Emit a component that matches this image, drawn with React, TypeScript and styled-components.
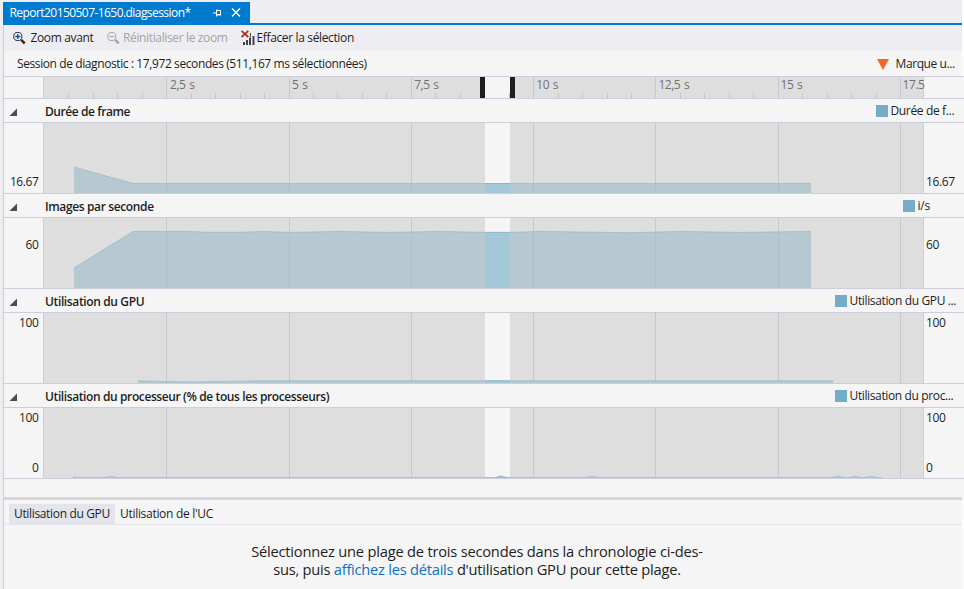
import React from "react";
import styled, { createGlobalStyle } from "styled-components";

const GlobalStyle = createGlobalStyle`
  * { box-sizing: border-box; }
  body {
    margin: 0;
    background: #eeeef2;
    color: #1e1e1e;
    font-family: "Open Sans", "Noto Sans", sans-serif;
    font-size: 12px;
    line-height: 16px;
    overflow: hidden;
  }
`;

const Window = styled.div`
  width: 964px;
  height: 589px;
  display: flex;
  flex-direction: column;
  background: #eeeef2;
`;

const Text = styled.span<{ $track?: number; $size?: number }>`
  white-space: pre;
  font-size: ${(p) => p.$size ?? 12}px;
  letter-spacing: ${(p) => p.$track ?? -0.3}px;
`;

const TopEdge = styled.div`
  height: 25px;
  border-right: 2px solid #fcfcfd;
  flex: none;
`;

const TabStrip = styled.div`
  height: 25px;
  margin-left: 3px;
  padding-top: 2px;
  border-bottom: 2px solid #007acc;
  display: flex;
`;

const DocumentTab = styled.div`
  width: 247px;
  height: 21px;
  padding: 1px 0 0 6.500px;
  background: #007acc;
  color: #fff;
  display: flex;
  align-items: center;
`;

const TabTitle = styled.div`
  width: 203.5px;
  display: flex;
`;

const TabIcons = styled.div`
  display: flex;
  align-items: center;
  gap: 9px;
  padding-bottom: 1px;
`;

const Body = styled.div`
  flex: 1;
  margin-left: 3px;
  border-left: 1px solid #cccedb;
  background: #f5f5f5;
  display: flex;
  flex-direction: column;
  min-height: 0;
`;

const Toolbar = styled.div`
  height: 26px;
  padding: 0 0 1px 9px;
  border-right: 2px solid #fcfcfd;
  background: #eeeef2;
  display: flex;
  align-items: center;
`;

const ToolButton = styled.div<{ $width: number; $gap: number; $disabled?: boolean }>`
  width: ${(p) => p.$width}px;
  display: flex;
  align-items: center;
  gap: ${(p) => p.$gap}px;
  color: ${(p) => (p.$disabled ? "#a2a4a5" : "#1e1e1e")};
`;

const SessionBar = styled.div`
  height: 25px;
  padding: 1px 7px 0 13px;
  border-right: 2px solid #fcfcfd;
  display: flex;
  align-items: center;
  justify-content: space-between;
`;

const MarkLegend = styled.div`
  width: 78px;
  display: flex;
  align-items: center;
  gap: 6.5px;
`;

const Lane = styled.div<{ $height: number }>`
  height: ${(p) => p.$height}px;
  border-top: 1px solid #cccedb;
  border-bottom: 1px solid #cccedb;
  display: grid;
  grid-template-columns: 39px 881px 1fr;
  flex: none;
`;

const Plot = styled.div`
  border-left: 1px solid #cccedb;
  border-right: 1px solid #cccedb;
  display: flex;
`;

const RulerPlot = styled(Plot)`
  display: grid;
  > * { grid-area: 1 / 1; }
`;

const RulerLabels = styled.div`
  display: grid;
  grid-template-columns: repeat(6, 122.1px) auto;
  padding-left: 122px;
  color: #717171;
`;

const RulerLabel = styled.div`
  padding-left: 4px;
  white-space: nowrap;
  letter-spacing: -0.45px;
  word-spacing: 1px;
`;

const Axis = styled.div<{ $right?: boolean; $top: number }>`
  padding: ${(p) => p.$top}px ${(p) => (p.$right ? 0 : 4.5)}px 0 ${(p) => (p.$right ? 2 : 0)}px;
  display: flex;
  flex-direction: column;
  align-items: ${(p) => (p.$right ? "flex-start" : "flex-end")};
  gap: 34px;
  line-height: 16px;
`;

const GraphHeader = styled.div`
  height: 23px;
  padding-left: 5px;
  display: flex;
  align-items: center;
  flex: none;
`;

const Expander = styled.svg`
  margin-top: 2px;
`;

const GraphTitle = styled.div`
  flex: 1;
  padding-left: 27px;
  padding-top: 2px;
  font-weight: 600;
  display: flex;
`;

const Legend = styled.div<{ $width: number }>`
  width: ${(p) => p.$width}px;
  display: flex;
  align-items: center;
  gap: 2.5px;
  padding-top: 1px;
`;

const Swatch = styled.div`
  width: 12px;
  height: 12px;
  background: #75adc8;
`;

const Splitter = styled.div`
  height: 3px;
  margin: 18px 2px 0 0;
  background: #d7d7da;
  flex: none;
`;

const Details = styled.div`
  flex: 1;
  border-right: 2px solid #fcfcfd;
`;

const DetailTabs = styled.div`
  height: 25px;
  padding: 4px 0 0 5px;
  border-bottom: 1px solid #e4e5ee;
  display: flex;
`;

const DetailTab = styled.div<{ $active?: boolean }>`
  height: 20px;
  padding: 2px 5px;
  background: ${(p) => (p.$active ? "#e4e5ec" : "transparent")};
  width: ${(p) => (p.$active ? 106 : 108)}px;
`;

const Message = styled.div`
  margin-top: 17px;
  margin-right: 12px;
  display: flex;
  flex-direction: column;
  align-items: center;
  line-height: 18px;
`;

const Link = styled.span`
  color: #0e70c0;
`;

const PX_PER_SECOND = 48.92;
const SELECTION = { start: 441, end: 466 };
const WIDTH = 879;

const timeToX = (seconds: number) => Math.floor(seconds * PX_PER_SECOND + 0.45);

const Shade = ({ height }: { height: number }) => (
  <g fill="#c7c7c7" fillOpacity=".5" shapeRendering="crispEdges">
    <rect x="0" y="0" width={SELECTION.start} height={height} />
    <rect x={SELECTION.end} y="0" width={WIDTH - SELECTION.end} height={height} />
  </g>
);

const MajorLines = ({ height }: { height: number }) => (
  <g fill="#c8c8d2" shapeRendering="crispEdges">
    {[1, 2, 3, 4, 5, 6, 7].map((i) => (
      <rect key={i} x={timeToX(i * 2.5)} y="0" width="1" height={height} />
    ))}
  </g>
);

const Ruler = () => (
  <Lane $height={23}>
    <div />
    <RulerPlot>
      <svg width={WIDTH} height="21">
        <g fill="#c2c2cb" shapeRendering="crispEdges">
          {Array.from({ length: 35 }, (_, i) => i + 1).map((i) => (
            <rect key={i} x={timeToX(i * 0.5)} y={16} width="1" height="5" />
          ))}
        </g>
        <MajorLines height={21} />
        <Shade height={21} />
        <g fill="#1e1e1e">
          <rect x={SELECTION.start - 5} width="5" height="21" />
          <rect x={SELECTION.end} width="5" height="21" />
        </g>
      </svg>
      <RulerLabels>
        {["2,5 s", "5 s", "7,5 s", "10 s", "12,5 s", "15 s", "17.5"].map((t) => (
          <RulerLabel key={t}>{t}</RulerLabel>
        ))}
      </RulerLabels>
    </RulerPlot>
    <div />
  </Lane>
);

interface GraphProps {
  title: string;
  titleTrack: number;
  legend: string;
  legendTrack: number;
  legendWidth: number;
  labels: string[];
  labelTop: number;
  points: number[][];
}

const Graph = (g: GraphProps) => {
  const line = g.points.map((p) => p.join(",")).join(" ");
  const first = g.points[0][0];
  const last = g.points[g.points.length - 1][0];
  return (
    <>
      <GraphHeader>
        <Expander width="9" height="9" viewBox="0 0 9 9">
          <path d="M8 1.5V9H.5Z" fill="#4a4a4f" />
        </Expander>
        <GraphTitle>
          <Text $track={g.titleTrack}>{g.title}</Text>
        </GraphTitle>
        <Legend $width={g.legendWidth}>
          <Swatch />
          <Text $track={g.legendTrack}>{g.legend}</Text>
        </Legend>
      </GraphHeader>
      <Lane $height={72}>
        <Axis $top={g.labelTop}>
          {g.labels.map((l) => <Text key={l} $track={-0.4}>{l}</Text>)}
        </Axis>
        <Plot>
          <svg width={WIDTH} height="70">
            <MajorLines height={70} />
            <polygon points={`${first},70 ${line} ${last},70`} fill="#75adc8" fillOpacity=".64" />
            <polyline points={line} fill="none" stroke="#75adc8" strokeOpacity=".8" />
            <Shade height={70} />
          </svg>
        </Plot>
        <Axis $right $top={g.labelTop}>
          {g.labels.map((l) => <Text key={l} $track={-0.4}>{l}</Text>)}
        </Axis>
      </Lane>
    </>
  );
};

const graphs: GraphProps[] = [
  {
    title: "Durée de frame", titleTrack: -0.42, legend: "Durée de f...", legendTrack: -0.35,
    legendWidth: 88, labels: ["16.67"], labelTop: 51,
    points: [[30, 44], [89, 60.5], [767, 60.5]],
  },
  {
    title: "Images par seconde", titleTrack: -0.37, legend: "i/s", legendTrack: -0.2,
    legendWidth: 61, labels: ["60"], labelTop: 19,
    points: [[30, 50], [89, 13.5], [144, 13.5], [164, 14.3], [196, 14.3], [218, 13.5], [246, 14.4],
      [296, 13.5], [344, 14.4], [396, 13.5], [441, 14.4], [466, 14.4], [496, 13.5], [586, 14.7],
      [636, 13.5], [696, 14.4], [767, 13.5]],
  },
  {
    title: "Utilisation du GPU", titleTrack: -0.37, legend: "Utilisation du GPU ...", legendTrack: -0.36,
    legendWidth: 129, labels: ["100"], labelTop: 2,
    points: [[94, 67.8], [120, 68.5], [150, 69], [180, 68.4], [220, 67.8], [789, 67.8]],
  },
  {
    title: "Utilisation du processeur (% de tous les processeurs)", titleTrack: -0.39,
    legend: "Utilisation du proc...", legendTrack: -0.37,
    legendWidth: 129, labels: ["100", "0"], labelTop: 2,
    points: [[29, 69], [40, 69.7], [60, 69.7], [67, 68.3], [74, 69.7], [451, 69.7], [457, 68], [463, 69.7],
      [541, 69.7], [548, 68.3], [555, 69.7], [787, 69.7], [794, 68.3], [801, 69.7], [805, 69.7],
      [811, 68.3], [817, 69.7], [820, 69.7], [827, 68.3], [834, 69.7], [838, 69.7]],
  },
];

const Magnifier = ({ plus, color, sign }: { plus?: boolean; color: string; sign: string }) => (
  <svg width="14" height="14" viewBox="0 0 14 14" fill="none">
    <circle cx="4.8" cy="5.5" r="4.1" stroke={color} strokeWidth="1" />
    <path d="M8.200 8.800L11.700 12.300" stroke={color} strokeWidth="2.6" />
    <path d={plus ? "M2.300 5.500H7.300M4.800 3V8" : "M2.300 5.500H7.300"} stroke={sign} strokeWidth="1.3" />
  </svg>
);

export default function App() {
  return (
    <Window>
      <GlobalStyle />
      <TopEdge>
        <TabStrip>
          <DocumentTab>
            <TabTitle>
              <Text $track={-0.56}>Report20150507-1650.diagsession*</Text>
            </TabTitle>
            <TabIcons>
              <svg width="9" height="8" viewBox="0 0 9 8" fill="none" stroke="#fff">
                <path d="M0 4H3M3.5 .5V7.5M3.5 1.5H7.5V5.5M3.5 5.5H8M3.5 6H8" />
              </svg>
              <svg width="10" height="9" viewBox="0 0 10 9" fill="none" stroke="#fff" strokeWidth="1.4">
                <path d="M1 .5L9 8.5M9 .5L1 8.5" />
              </svg>
            </TabIcons>
          </DocumentTab>
        </TabStrip>
      </TopEdge>
      <Body>
        <Toolbar>
          <ToolButton $width={94} $gap={3.5}>
            <Magnifier plus color="#2d2d30" sign="#00539c" />
            <Text $track={-0.36}>Zoom avant</Text>
          </ToolButton>
          <ToolButton $width={134} $gap={2} $disabled>
            <Magnifier color="#a2a4a5" sign="#a9a9c0" />
            <Text $track={-0.36}>Réinitialiser le zoom</Text>
          </ToolButton>
          <ToolButton $width={130} $gap={1.5}>
            <svg width="14" height="15" viewBox="0 0 14 15">
              <path d="M2 12h2v3H2zM5 10h2v5H5zM8 7.500h2V15H8zM11.500 6h2v9h-2zM9 3h1v4H9z" fill="#424242" />
              <path d="M.5 .8L7.300 7M7.300 .8L.5 7" stroke="#b0301c" strokeWidth="1.8" />
            </svg>
            <Text $track={-0.36}>Effacer la sélection</Text>
          </ToolButton>
        </Toolbar>
        <SessionBar>
          <Text $track={-0.4}>Session de diagnostic : 17,972 secondes (511,167 ms sélectionnées)</Text>
          <MarkLegend>
            <svg width="12" height="11" viewBox="0 0 12 11">
              <path d="M0 0H12L6 11Z" fill="#f26522" />
            </svg>
            <Text $track={-0.4}>Marque u...</Text>
          </MarkLegend>
        </SessionBar>
        <Ruler />
        {graphs.map((g) => <Graph key={g.title} {...g} />)}
        <Splitter />
        <Details>
          <DetailTabs>
            <DetailTab $active><Text $track={-0.34}>Utilisation du GPU</Text></DetailTab>
            <DetailTab><Text $track={-0.3}>Utilisation de l'UC</Text></DetailTab>
          </DetailTabs>
          <Message>
            <Text $size={14.67} $track={-0.21}>Sélectionnez une plage de trois secondes dans la chronologie ci-des-</Text>
            <Text $size={14.67} $track={-0.24}>
              sus, puis <Link>affichez les détails</Link> d'utilisation GPU pour cette plage.
            </Text>
          </Message>
        </Details>
      </Body>
    </Window>
  );
}
